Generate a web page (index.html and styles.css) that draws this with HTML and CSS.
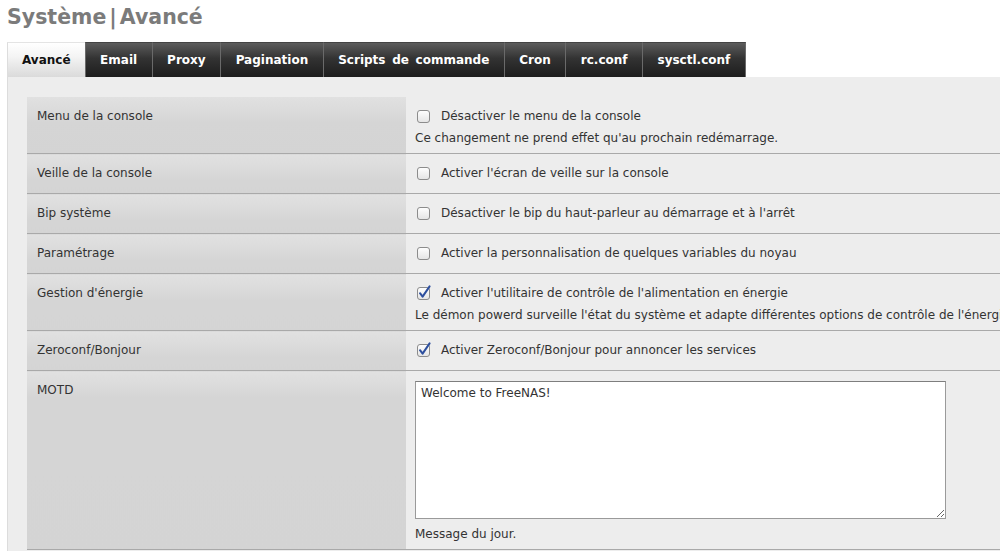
FILE: index.html
```html
<!DOCTYPE html>
<html lang="fr">
<head>
<meta charset="utf-8">
<title>Système | Avancé</title>
<link rel="stylesheet" href="styles.css">
</head>
<body>
<div class="page">
  <h1 class="title">Système<span class="sep">|</span>Avancé</h1>
  <ul class="tabs">
    <li class="tab active">Avancé</li>
    <li class="tab">Email</li>
    <li class="tab">Proxy</li>
    <li class="tab">Pagination</li>
    <li class="tab">Scripts de commande</li>
    <li class="tab">Cron</li>
    <li class="tab">rc.conf</li>
    <li class="tab">sysctl.conf</li>
  </ul>
  <div class="panel">
    <table class="form">
      <tr>
        <td class="label">Menu de la console</td>
        <td class="value">
          <div class="check"><svg class="cb" viewBox="0 0 16 16" width="16" height="16"><rect x="1.5" y="2.5" width="12" height="12" rx="2.5" fill="url(#g)" stroke="#8c8c8c"/></svg>Désactiver le menu de la console</div>
          <div class="help">Ce changement ne prend effet qu'au prochain redémarrage.</div>
        </td>
      </tr>
      <tr>
        <td class="label">Veille de la console</td>
        <td class="value">
          <div class="check"><svg class="cb" viewBox="0 0 16 16" width="16" height="16"><rect x="1.5" y="2.5" width="12" height="12" rx="2.5" fill="url(#g)" stroke="#8c8c8c"/></svg>Activer l'écran de veille sur la console</div>
        </td>
      </tr>
      <tr>
        <td class="label">Bip système</td>
        <td class="value">
          <div class="check"><svg class="cb" viewBox="0 0 16 16" width="16" height="16"><rect x="1.5" y="2.5" width="12" height="12" rx="2.5" fill="url(#g)" stroke="#8c8c8c"/></svg>Désactiver le bip du haut-parleur au démarrage et à l'arrêt</div>
        </td>
      </tr>
      <tr>
        <td class="label">Paramétrage</td>
        <td class="value">
          <div class="check"><svg class="cb" viewBox="0 0 16 16" width="16" height="16"><rect x="1.5" y="2.5" width="12" height="12" rx="2.5" fill="url(#g)" stroke="#8c8c8c"/></svg>Activer la personnalisation de quelques variables du noyau</div>
        </td>
      </tr>
      <tr>
        <td class="label">Gestion d'énergie</td>
        <td class="value">
          <div class="check"><svg class="cb" viewBox="0 0 16 16" width="16" height="16"><rect x="1.5" y="2.5" width="12" height="12" rx="2.5" fill="url(#g)" stroke="#8c8c8c"/><path d="M4 8.2 L6.6 11.6 L13.6 1.4" fill="none" stroke="#2d4f9e" stroke-width="2" stroke-linecap="round" stroke-linejoin="round"/></svg>Activer l'utilitaire de contrôle de l'alimentation en énergie</div>
          <div class="help">Le démon powerd surveille l'état du système et adapte différentes options de contrôle de l'énergie en conséquence.</div>
        </td>
      </tr>
      <tr>
        <td class="label">Zeroconf/Bonjour</td>
        <td class="value">
          <div class="check"><svg class="cb" viewBox="0 0 16 16" width="16" height="16"><rect x="1.5" y="2.5" width="12" height="12" rx="2.5" fill="url(#g)" stroke="#8c8c8c"/><path d="M4 8.2 L6.6 11.6 L13.6 1.4" fill="none" stroke="#2d4f9e" stroke-width="2" stroke-linecap="round" stroke-linejoin="round"/></svg>Activer Zeroconf/Bonjour pour annoncer les services</div>
        </td>
      </tr>
      <tr>
        <td class="label">MOTD</td>
        <td class="value">
          <textarea class="motd">Welcome to FreeNAS!</textarea>
          <div class="help">Message du jour.</div>
        </td>
      </tr>
    </table>
  </div>
</div>
<svg class="defs" width="0" height="0">
  <defs>
    <linearGradient id="g" x1="0" y1="0" x2="0" y2="1">
      <stop offset="0" stop-color="#ffffff"/>
      <stop offset="1" stop-color="#e4e4e4"/>
    </linearGradient>
  </defs>
</svg>
</body>
</html>
```
FILE: styles.css
```css
html, body {
  margin: 0;
  padding: 0;
  overflow: hidden;
  background: #ffffff;
}
body {
  font-family: "DejaVu Sans", Verdana, sans-serif;
  font-size: 12px;
  color: #333333;
}
.page {
  padding-left: 7px;
  width: 1300px;
  height: 551px;
  overflow: hidden;
}
.title {
  margin: 0 0 12px 0;
  padding-top: 5px;
  font-size: 20.5px;
  line-height: 25px;
  font-weight: bold;
  color: #7b7b7b;
}
.title .sep {
  margin: 0 3px;
}
.tabs {
  list-style: none;
  margin: 0;
  padding: 0;
  display: flex;
  height: 35px;
}
.tab {
  padding: 0 14.5px;
  line-height: 35px;
  font-weight: bold;
  word-spacing: 2.5px;
  color: #ffffff;
  background: linear-gradient(#5c5c5c, #333333 45%, #1d1d1d);
  border-left: 1px solid #6a6a6a;
  border-top: 1px solid #444444;
  box-sizing: border-box;
}
.tab:last-child {
  border-right: 1px solid #6a6a6a;
}
.tab.active {
  padding: 0 14px;
  color: #111111;
  background: linear-gradient(#ffffff, #f4f4f4 40%, #dadada);
  border-left: 1px solid #dddddd;
  border-top: 1px solid #e4e4e4;
}
.panel {
  background: #ededed;
  border-left: 1px solid #dcdcdc;
  padding: 20px 0 4px 19px;
}
.form {
  border-collapse: collapse;
  width: 1200px;
}
.form td {
  border-bottom: 1px solid #a9a9a9;
  vertical-align: top;
}
.label {
  width: 359px;
  padding: 10px 10px;
  line-height: 18px;
  background: linear-gradient(#e1e1e1, #d5d5d5 26px, #d4d4d4);
  color: #333333;
}
.value {
  padding: 10px 10px 7px 9px;
}
.check {
  display: flex;
  align-items: center;
  height: 18px;
  line-height: 18px;
  margin-bottom: 4px;
  white-space: nowrap;
}
.check + .help {
  padding-top: 1px;
}
.cb {
  flex: none;
  margin: 0 9px 0 1px;
}
.help {
  line-height: 16px;
  white-space: nowrap;
}
.motd {
  display: block;
  box-sizing: border-box;
  width: 531px;
  height: 138px;
  margin: 0 0 7px 0;
  padding: 4px 5px;
  border: 1px solid #9a9a9a;
  border-top-color: #7e7e7e;
  background: #ffffff;
  font-family: "DejaVu Sans", Verdana, sans-serif;
  font-size: 12px;
  color: #333333;
}
.defs {
  position: absolute;
  width: 0;
  height: 0;
}
```
